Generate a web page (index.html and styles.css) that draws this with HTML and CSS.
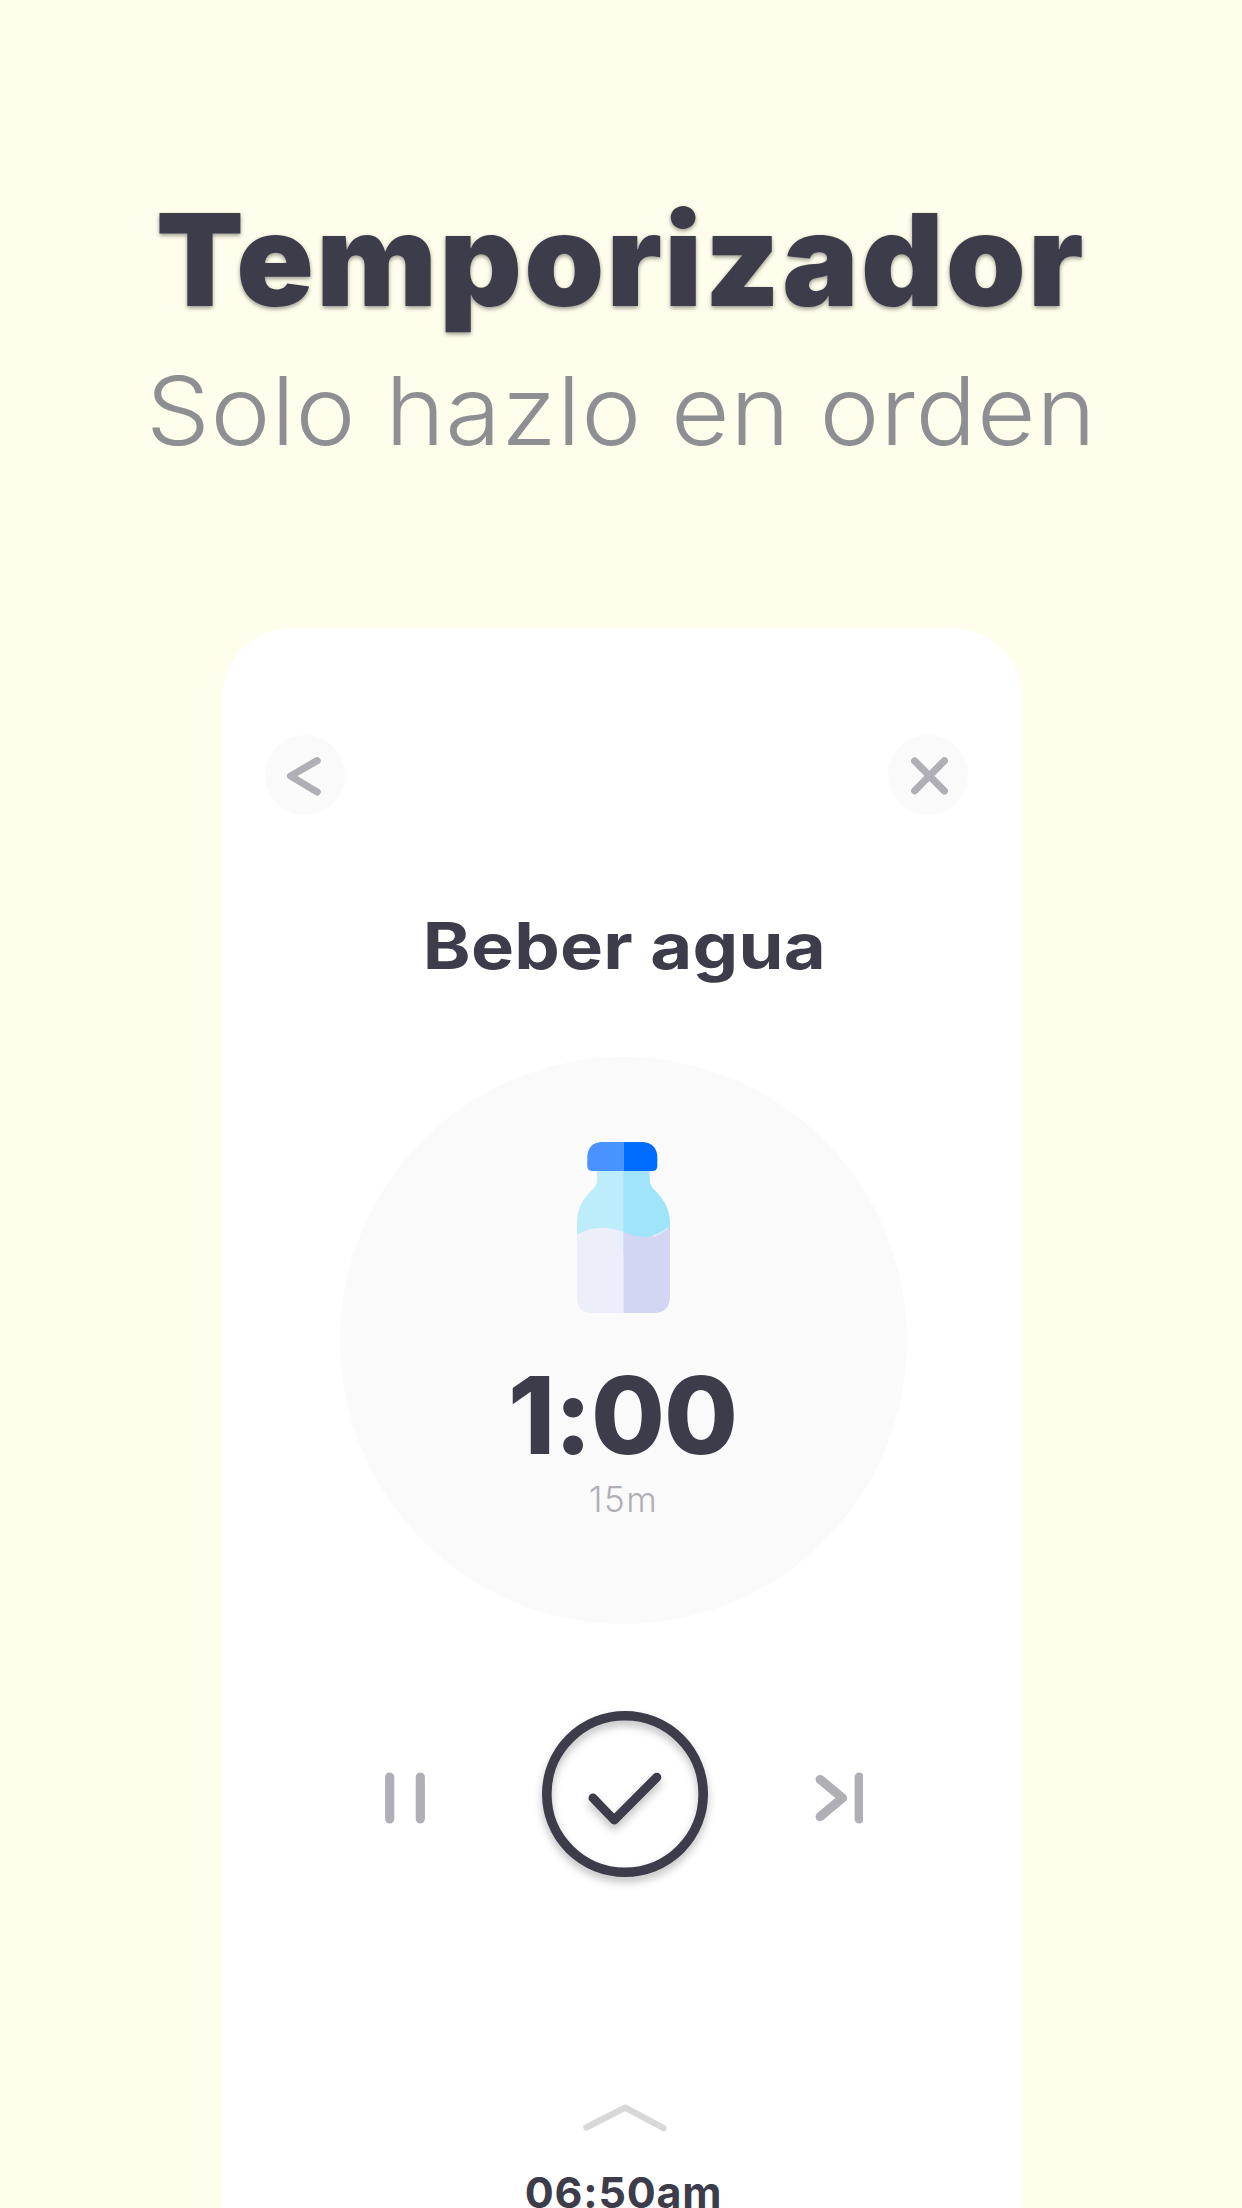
FILE: index.html
```html
<!DOCTYPE html>
<html lang="es">
<head>
<meta charset="utf-8">
<title>Temporizador</title>
<link rel="stylesheet" href="styles.css">
</head>
<body>
<header class="hero">
  <h1 class="hero-title">Temporizador</h1>
  <p class="hero-subtitle">Solo hazlo en orden</p>
</header>
<main class="phone">
  <nav class="topbar">
    <button class="round" aria-label="Atrás"><svg width="80" height="80" viewBox="0 0 80 80"><path d="M52.200 25.700 25.500 41 52.200 57"/></svg></button>
    <button class="round" aria-label="Cerrar"><svg width="80" height="80" viewBox="0 0 80 80"><path d="M26.700 26 56.400 56M56.400 25.700 26.700 55.700"/></svg></button>
  </nav>
  <h2 class="task">Beber agua</h2>
  <section class="dial">
    <svg class="bottle" width="93" height="171" viewBox="0 0 93 171">
      <defs><clipPath id="right-half"><path d="M46.5 0H93V171H46.5Z"/></clipPath></defs>
      <path fill="#bdecfa" d="M20 27V36C20 42 19 44.500 14.500 48.500 5 58 0 67 0 83V112H93V83C93 67 87 58 78 48.500 74 44.500 72.500 42 72.500 36V27Z"/>
      <path clip-path="url(#right-half)" fill="#9fe4f8" d="M20 27V36C20 42 19 44.500 14.500 48.500 5 58 0 67 0 83V112H93V83C93 67 87 58 78 48.500 74 44.500 72.500 42 72.500 36V27Z"/>
      <path fill="#eceffa" d="M0 92.500C15 84 31 84 46.500 90V171H14Q0 170 0 156Z"/>
      <path fill="#d2d6f3" d="M46.500 90C62 97 77 97 93 86V156Q92 170 78 171H46.500Z"/>
      <path fill="none" stroke="#e6e8f8" stroke-width="1.600" d="M76 94Q84 92 91 86"/>
      <path fill="#4893ff" d="M10.300 14Q11.500 1 24 0H46.500V29H14.500Q10.300 28.500 10.300 24Z"/>
      <path fill="#006dff" d="M46.500 0H66Q79 1 80.300 14V24Q80.300 28.500 76 29H46.500Z"/>
    </svg>
    <div class="time">1:00</div>
    <div class="total">15m</div>
  </section>
  <section class="controls">
    <svg class="pause" width="40" height="52" viewBox="0 0 40 52"><path d="M4.700 5V47M35.300 5V47"/></svg>
    <svg class="done" width="166" height="166" viewBox="0 0 166 166"><circle cx="83" cy="83" r="78.200"/><path d="M51 87 72.200 109 114.800 66.300"/></svg>
    <svg class="skip" width="48" height="52" viewBox="0 0 48 52"><path d="M5.200 7.500 27.500 26 5.200 44.500M44.200 5V47"/></svg>
  </section>
  <svg class="up" width="84" height="28" viewBox="0 0 84 28"><path d="M3.500 23.300 42.200 3.700 80.500 24"/></svg>
  <div class="clock">06:50am</div>
</main>
</body>
</html>
```
FILE: styles.css
```css
* { box-sizing: border-box; }
html, body { margin: 0; height: 2208px; overflow: hidden; }
body {
  background: #fffdeb;
  color: #3c3c4a;
  font-family: Inter, "Open Sans", sans-serif;
  font-feature-settings: "calt" 0;
}
h1, h2, p { margin: 0; white-space: nowrap; }
.hero {
  height: 628px;
  padding-top: 190px;
  display: flex;
  flex-direction: column;
  align-items: center;
  gap: 26px;
}
.hero-title {
  font-size: 128px;
  font-weight: 900;
  line-height: 140px;
  letter-spacing: 2.300px;
  text-shadow: 0 2px 4px rgba(0, 0, 0, .4);
}
.hero-subtitle {
  font-size: 95px;
  font-weight: 330;
  line-height: 110px;
  letter-spacing: .6px;
  transform: scaleX(1.065);
  color: #8e8f92;
}
.phone {
  width: 800px;
  height: 1580px;
  margin-left: 222px;
  padding-top: 107px;
  background: #fff;
  border-radius: 70px 70px 0 0;
  overflow: hidden;
  display: flex;
  flex-direction: column;
  align-items: center;
}
.phone > * { flex: none; }
.topbar {
  width: 100%;
  padding: 0 54.500px 0 42.500px;
  display: flex;
  justify-content: space-between;
}
.round {
  width: 80px;
  height: 80px;
  padding: 0;
  border: 0;
  border-radius: 50%;
  background: #fafafa;
}
svg { display: block; flex: none; }
.round path, .pause path, .skip path, .up path {
  fill: none;
  stroke: #b0afb6;
  stroke-width: 7.200px;
  stroke-linecap: round;
  stroke-linejoin: round;
}
.task {
  margin: 91px 0 0 4px;
  font-size: 64px;
  font-weight: 700;
  line-height: 80px;
  letter-spacing: .2px;
  transform: scaleX(1.13);
}
.dial {
  width: 567px;
  height: 567px;
  margin: 70.500px 0 0 3px;
  padding-top: 85.500px;
  border-radius: 50%;
  background: #fafafa;
  display: flex;
  flex-direction: column;
  align-items: center;
}
.bottle { margin-right: .5px; }
.time {
  margin: 47px 2px 0 0;
  font-size: 107px;
  font-weight: 800;
  line-height: 110px;
  letter-spacing: -1px;
}
.total {
  margin-top: 9px;
  font-size: 35px;
  font-weight: 300;
  line-height: 40px;
  letter-spacing: 1.500px;
  color: #b0afb6;
}
.controls {
  width: 478px;
  margin: 87.500px 0 0 4px;
  display: grid;
  grid-template-columns: 1fr auto 1fr;
  align-items: center;
}
.pause, .skip { margin-top: 7px; }
.skip { justify-self: end; }
.pause path, .skip path { stroke-width: 9.200px; }
.done {
  margin: 0 -1px 0 1px;
  overflow: visible;
  fill: none;
  stroke: #3c3c4a;
  stroke-width: 9.600px;
  stroke-linecap: round;
  stroke-linejoin: round;
  filter: drop-shadow(0 5px 4px rgba(0, 0, 0, .25));
}
.done path { stroke-width: 9px; }
.up { margin: 227px 0 0 6px; }
.up path { stroke: #d8d8d8; stroke-width: 6.500px; }
.clock {
  margin: 35px 0 0 3px;
  font-size: 43px;
  font-weight: 750;
  line-height: 50px;
  letter-spacing: .8px;
}
```
